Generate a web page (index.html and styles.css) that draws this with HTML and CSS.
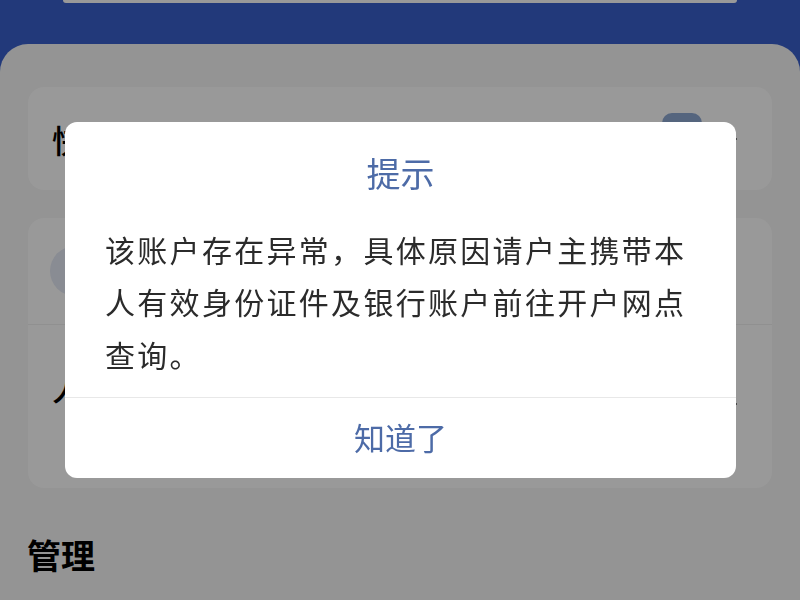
FILE: index.html
```html
<!DOCTYPE html>
<html lang="zh-CN">
<head>
<meta charset="utf-8">
<title>提示</title>
<link rel="stylesheet" href="styles.css">
</head>
<body>
<div class="page">
  <header class="header">
    <div class="search"></div>
  </header>
  <main class="sheet">
    <section class="card card-top">
      <span class="row-label">快捷支付</span>
      <span class="badge"></span>
      <span class="chev"></span>
    </section>
    <section class="card card-list">
      <div class="row row-user">
        <span class="avatar"></span>
      </div>
      <div class="row row-face">
        <span class="row-label">人脸识别</span>
        <span class="chev"></span>
      </div>
    </section>
    <h2 class="section-title">管理</h2>
  </main>
</div>

<div class="overlay">
  <div class="dialog">
    <h3 class="dialog-title">提示</h3>
    <p class="dialog-body">该账户存在异常，具体原因请户主携带本人有效身份证件及银行账户前往开户网点查询。</p>
    <div class="dialog-actions">
      <span class="dialog-btn">知道了</span>
    </div>
  </div>
</div>
</body>
</html>
```

FILE: styles.css
```css
* { box-sizing: border-box; }

html, body {
  margin: 0;
  padding: 0;
}

body {
  width: 800px;
  height: 600px;
  overflow: hidden;
  background: #3a60cc;
  font-family: "Noto Sans CJK SC", "Noto Sans", sans-serif;
  color: #000;
}

.header {
  height: 44px;
  padding: 0 63px;
}

.search {
  height: 3px;
  background: #ffffff;
  border-radius: 0 0 4px 4px;
}

.sheet {
  background: #f7f7f7;
  border-radius: 28px 28px 0 0;
  padding: 43px 28px 0;
  height: 556px;
}

.card {
  background: #fff;
  border-radius: 16px;
}

.card-top {
  height: 103px;
  display: flex;
  align-items: center;
  padding: 0 38px 0 24px;
  gap: 16px;
}

.row-label {
  font-size: 32px;
  font-weight: 500;
  line-height: 40px;
  flex: 1;
}

.badge {
  width: 40px;
  height: 52px;
  border-radius: 10px;
  background: #8ea8d2;
  margin-right: 2px;
}

.chev {
  width: 14px;
  height: 14px;
  border-top: 3px solid #222;
  border-right: 3px solid #222;
  transform: rotate(45deg);
}

.card-list {
  margin-top: 28px;
  height: 270px;
  display: flex;
  flex-direction: column;
}

.row {
  display: flex;
  align-items: center;
  padding: 0 38px 0 24px;
  gap: 16px;
}

.row-user {
  height: 107px;
  border-bottom: 1px solid #f0f0f0;
}

.avatar {
  width: 50px;
  height: 50px;
  border-radius: 50%;
  background: #e4e9f5;
  margin-left: -2px;
}

.row-face {
  flex: 1;
  align-items: flex-start;
  padding-top: 42px;
}

.row-face .chev {
  margin-top: 30px;
}

.section-title {
  margin: 47px 0 0 -1px;
  font-size: 34px;
  font-weight: 700;
  line-height: 40px;
}

/* Modal */
.overlay {
  position: fixed;
  inset: 0;
  background: rgba(0, 0, 0, 0.4);
  display: flex;
  align-items: center;
  justify-content: center;
}

.dialog {
  width: 671px;
  background: #fff;
  border-radius: 12px;
  overflow: hidden;
  margin-left: 1px;
}

.dialog-title {
  margin: 0;
  padding-top: 31px;
  text-align: center;
  font-size: 34px;
  font-weight: 400;
  line-height: 40px;
  color: #4d6ba7;
}

.dialog-body {
  margin: 30px 0 0;
  padding: 0 40px 17px;
  font-size: 30px;
  letter-spacing: 2.3px;
  line-height: 52.5px;
  color: #2b2b2b;
}

.dialog-actions {
  border-top: 1px solid #e8e8e8;
  height: 81px;
  display: flex;
  align-items: center;
  justify-content: center;
}

.dialog-btn {
  font-size: 31px;
  line-height: 40px;
  color: #4d6ba7;
  margin-top: -2px;
}
```
